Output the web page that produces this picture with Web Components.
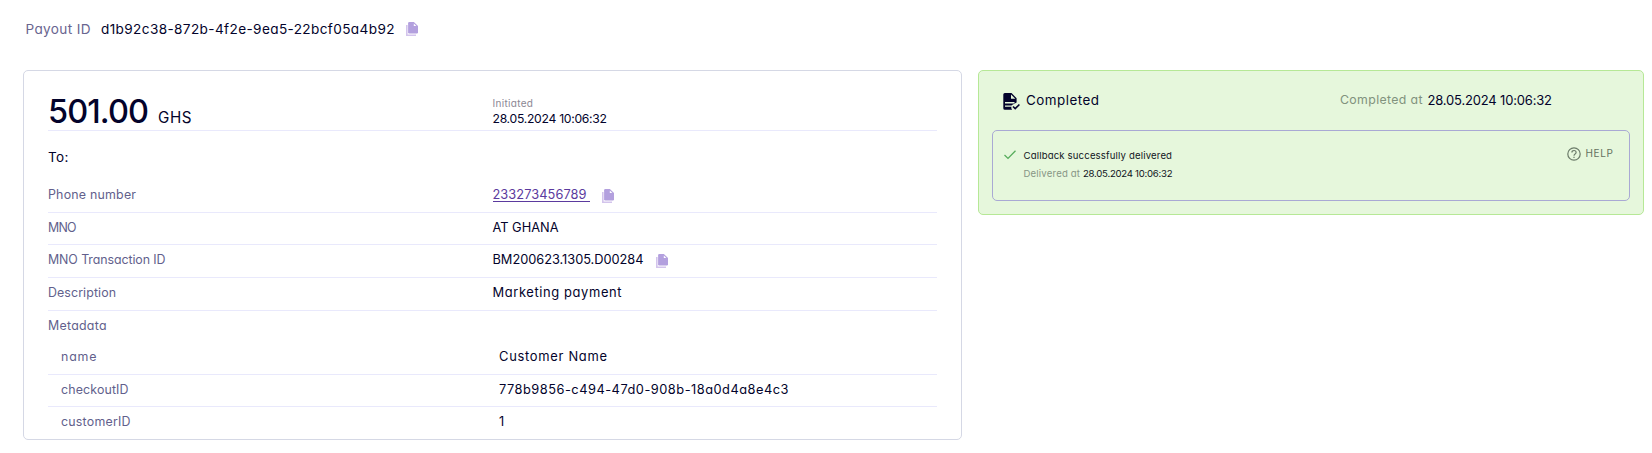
<!DOCTYPE html>
<html lang="en">
<head>
<meta charset="utf-8">
<title>Payout details</title>
<style>
body { margin: 0; background: #fff; font-family: Inter, "Open Sans", sans-serif; font-size: 12.4px; font-weight: 440; color: #03032b; font-feature-settings: "cv11" 1; }
</style>
</head>
<body>
<payout-page></payout-page>
<script>
const define = (name, html, ready) => {
  const tpl = document.createElement('template');
  tpl.innerHTML = html;
  customElements.define(name, class extends HTMLElement {
    connectedCallback() {
      if (this.shadowRoot) return;
      this.attachShadow({ mode: 'open' }).append(tpl.content.cloneNode(true));
      if (ready) ready.call(this, this.shadowRoot);
    }
  });
};

/* Tracked text: spreads its letters over the given measure. */
define('tracked-text', `<style>
  :host { display: inline-block; white-space: pre; flex: none; }
</style><span><slot></slot></span>`, function (root) {
  const size = this.getAttribute('size');
  const width = +this.getAttribute('width');
  if (size) this.style.fontSize = size + 'px';
  const span = root.querySelector('span');
  const n = this.textContent.length;
  const natural = span.getBoundingClientRect().width;
  if (width && n > 1) {
    span.style.letterSpacing = ((width - natural) / (n - 1)).toFixed(4) + 'px';
    this.style.width = width + 'px';
  }
});

define('copy-icon', `<style>:host { display: block; width: 12px; height: 14px; flex: none; } svg { display: block; }</style>
<svg width="12" height="14" viewBox="0 0 12 14">
  <path d="M.5 3v9.5q0 1 1 1H10" fill="none" stroke="#d3c4ec" stroke-width="2.2"/>
  <path d="M3.300 0h4.600L12 4v6.200q0 1.200-1.200 1.200H3.300q-1.200 0-1.200-1.200V1.200Q2.100 0 3.300 0z" fill="#b3a0de"/>
  <path d="M7.800 1.600v2.500h2.500z" fill="#fff"/>
</svg>`);

define('document-check-icon', `<style>:host { display: block; width: 17px; height: 18px; flex: none; } svg { display: block; }</style>
<svg width="17" height="18" viewBox="0 0 17 18">
  <path fill="#03032b" d="M1.800 0H8.500L13.600 5.200V9.500L9 12L8.200 14L9 16.800H1.800Q.300 16.800 .300 15.300V1.500Q.300 0 1.800 0z"/>
  <path fill="#e6f7dc" d="M8 1.400V5.700H12.300zM2 9h9.500v1.400H2zM2 12.400h7v1.400H2z"/>
  <path fill="none" stroke="#e6f7dc" stroke-width="4" d="M9.800 14L12 16L16 12"/>
  <path fill="none" stroke="#03032b" stroke-width="1.700" d="M10 13.500L12.200 15.600L16.400 11.500"/>
</svg>`);

define('check-icon', `<style>:host { display: block; width: 12px; height: 10px; flex: none; } svg { display: block; }</style>
<svg width="12" height="10" viewBox="0 0 12 10"><path d="M.5 5L4 8.400L11.500 .700" fill="none" stroke="#57ad5c" stroke-width="1.300"/></svg>`);

define('help-icon', `<style>:host { display: block; width: 14px; height: 14px; flex: none; } svg { display: block; }</style>
<svg width="14" height="14" viewBox="0 0 14 14" fill="none" stroke="#6b7b69" stroke-width="1.200">
  <circle cx="7" cy="7" r="6.200"/>
  <path d="M4.900 5.600Q4.900 3.500 7 3.500T9.100 5.500Q9.100 6.400 8.100 7T7 8.800"/>
  <path d="M7 9.700v1.300"/>
</svg>`);

define('payout-header', `<style>
  :host { display: flex; align-items: center; height: 58px; padding-left: 25.500px; box-sizing: border-box; line-height: 20px; }
  .label { color: #69658f; margin-right: 10.500px; }
  copy-icon { margin-left: 11px; }
</style>
<tracked-text class="label" size="13.6" width="65">Payout ID</tracked-text>
<tracked-text size="13.6" width="293.500">d1b92c38-872b-4f2e-9ea5-22bcf05a4b92</tracked-text>
<copy-icon></copy-icon>`);

define('detail-row', `<style>
  :host { display: grid; grid-template-columns: 444.5px 1fr; align-items: center; box-sizing: border-box; height: 33px; padding-bottom: 2px; border-bottom: 1px solid #e9e9fc; line-height: 18px; }
  :host([short]) { height: 32px; }
  :host([tall]) { height: 34px; }
  :host([plain]) { border-bottom: 0; }
  :host([nested]) { padding-left: 13px; grid-template-columns: 438px 1fr; }
  .label { color: #625f8c; }
  .value { display: flex; align-items: center; }
</style>
<div class="label"><slot name="label"></slot></div>
<div class="value"><slot></slot></div>`);

define('payout-summary', `<style>
  :host { display: block; box-sizing: border-box; width: 939px; height: 370px; padding: 0 24px; border: 1px solid #d5d8e5; border-radius: 5px; background: #fff; }
  .top { display: grid; grid-template-columns: 444.5px 1fr; height: 60px; box-sizing: border-box; border-bottom: 1px solid #e9e9fc; }
  .amount { display: flex; align-items: baseline; padding-top: 21px; line-height: 40px; }
  .amount .sum { font-weight: 480; }
  .amount .cur { margin-left: 9px; }
  .when { display: flex; flex-direction: column; padding-top: 25px; }
  .when .cap { line-height: 15px; color: #8b8794; }
  .when .date { line-height: 16px; }
  .to { height: 48px; box-sizing: border-box; padding-top: 16px; line-height: 20px; }
  .link { color: #5b3a9e; box-shadow: 0 1px #5b3a9e; line-height: 13px; padding-right: 3px; }
  .link tracked-text { display: block; }
  copy-icon { position: relative; top: 1px; margin-left: 12px; }
</style>
<div class="top">
  <div class="amount"><tracked-text class="sum" size="32.5" width="101">501.00</tracked-text><tracked-text class="cur" size="15.2" width="33.500">GHS</tracked-text></div>
  <div class="when"><tracked-text class="cap" size="10" width="40.500">Initiated</tracked-text><tracked-text class="date" size="12.2" width="114.500">28.05.2024 10:06:32</tracked-text></div>
</div>
<div class="to"><tracked-text size="13.5" width="20.5">To:</tracked-text></div>
<detail-row tall><tracked-text slot="label" width="88">Phone number</tracked-text><span class="link"><tracked-text size="12.8" width="94">233273456789</tracked-text></span><copy-icon></copy-icon></detail-row>
<detail-row short><tracked-text slot="label" width="28.500">MNO</tracked-text><tracked-text size="12.8" width="66">AT GHANA</tracked-text></detail-row>
<detail-row><tracked-text slot="label" width="117.500">MNO Transaction ID</tracked-text><tracked-text size="12.8" width="151">BM200623.1305.D00284</tracked-text><copy-icon></copy-icon></detail-row>
<detail-row><tracked-text slot="label" width="68">Description</tracked-text><tracked-text size="12.9" width="129">Marketing payment</tracked-text></detail-row>
<detail-row plain style="height:30px;padding-bottom:0"><tracked-text slot="label" width="58.500">Metadata</tracked-text></detail-row>
<detail-row nested tall><tracked-text slot="label" width="35.5">name</tracked-text><tracked-text size="12.9" width="108">Customer Name</tracked-text></detail-row>
<detail-row nested short><tracked-text slot="label" width="67.500">checkoutID</tracked-text><tracked-text size="12.8" width="289.5">778b9856-c494-47d0-908b-18a0d4a8e4c3</tracked-text></detail-row>
<detail-row nested plain short><tracked-text slot="label" width="69.500">customerID</tracked-text><tracked-text size="12.8">1</tracked-text></detail-row>`);

define('callback-box', `<style>
  :host { display: flex; box-sizing: border-box; height: 71px; border: 1px solid #a9a9d4; border-radius: 5px; padding: 0 16px 0 11px; }
  check-icon { margin: 19px 7.500px 0 0; }
  .text { flex: 1; display: flex; flex-direction: column; padding-top: 16px; line-height: 18px; color: #101522; }
  .sub { margin-top: -1px; }
  .muted { color: #879585; margin-right: 3px; }
  .help { display: flex; align-items: center; gap: 5px; height: 14px; margin-top: 16px; color: #65725f; line-height: 14px; }
  .help tracked-text { position: relative; top: -1px; }
</style>
<check-icon></check-icon>
<div class="text">
  <tracked-text size="9.6" width="148.5">Callback successfully delivered</tracked-text>
  <div class="sub"><tracked-text class="muted" size="9.6" width="56.5">Delivered at</tracked-text><tracked-text size="9.6" width="89.500">28.05.2024 10:06:32</tracked-text></div>
</div>
<div class="help"><help-icon></help-icon><tracked-text size="10" width="27.500">HELP</tracked-text></div>`);

define('payout-status', `<style>
  :host { display: block; box-sizing: border-box; width: 666px; height: 145px; padding: 0 13px; border: 1px solid #b6e896; border-radius: 5px; background: #e6f7dc; }
  .head { display: flex; align-items: center; height: 59px; padding: 0 78px 0 11px; line-height: 20px; }
  document-check-icon { margin-right: 6px; position: relative; top: 1px; }
  tracked-text { position: relative; top: -.5px; }
  .muted { color: #81927d; margin-left: auto; margin-right: 5px; }
</style>
<div class="head">
  <document-check-icon></document-check-icon>
  <tracked-text size="13.4" width="73">Completed</tracked-text>
  <tracked-text class="muted" size="12.3" width="82.500">Completed at</tracked-text>
  <tracked-text size="13" width="124.5">28.05.2024 10:06:32</tracked-text>
</div>
<callback-box></callback-box>`);

define('payout-page', `<style>
  :host { display: block; box-sizing: border-box; height: 453px; overflow: hidden; }
  main { display: flex; align-items: flex-start; gap: 16px; padding: 12px 0 0 23px; }
</style>
<payout-header></payout-header>
<main><payout-summary></payout-summary><payout-status></payout-status></main>`);
</script>
</body>
</html>
